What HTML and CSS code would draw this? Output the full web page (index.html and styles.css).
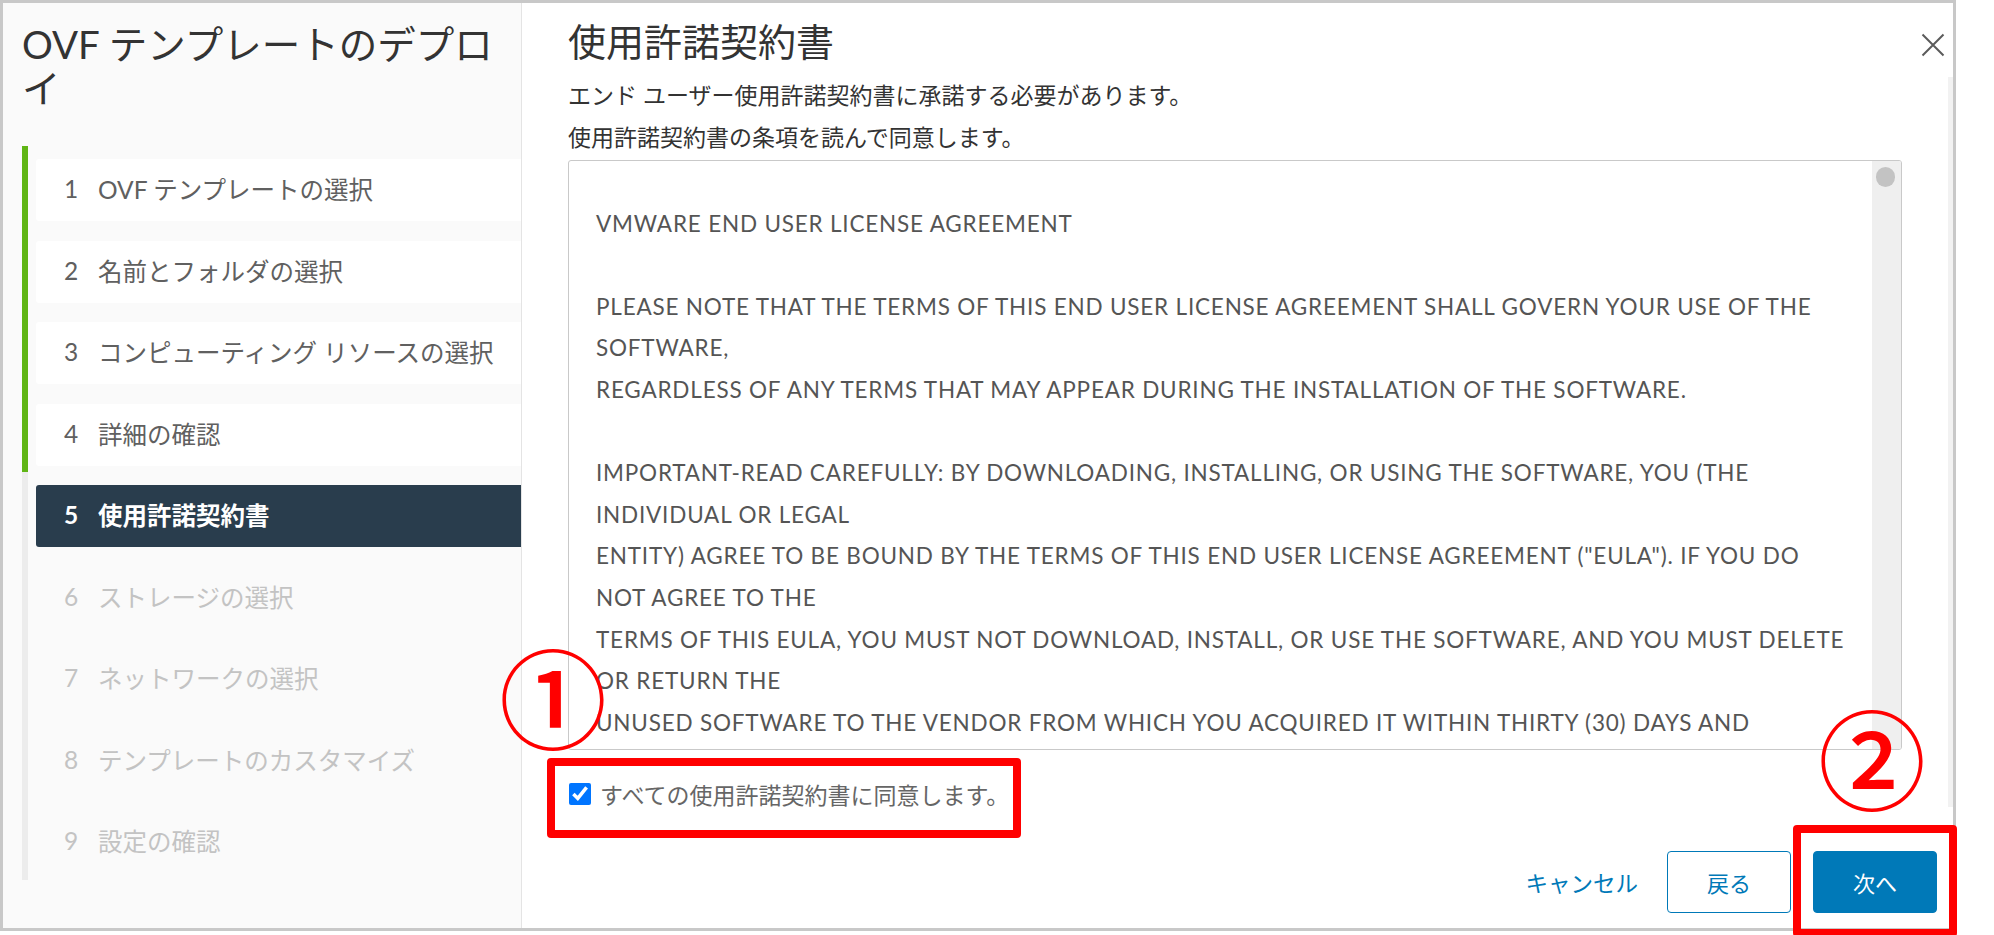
FILE: index.html
```html
<!DOCTYPE html>
<html>
  <head>
    <meta charset="utf-8">
    <link rel="stylesheet" href="styles.css">
  </head>
  <body>
    <div class="dialog">
      <aside class="sidebar">
        <h2 class="wizard-title">OVF テンプレートのデプロイ</h2>
        <ol class="steps">
          <li class="step done"><div class="step-box"><span class="num">1</span>OVF テンプレートの選択</div></li>
          <li class="step done"><div class="step-box"><span class="num">2</span>名前とフォルダの選択</div></li>
          <li class="step done"><div class="step-box"><span class="num">3</span>コンピューティング リソースの選択</div></li>
          <li class="step done"><div class="step-box"><span class="num">4</span>詳細の確認</div></li>
          <li class="step active"><div class="step-box"><span class="num">5</span>使用許諾契約書</div></li>
          <li class="step disabled"><div class="step-box"><span class="num">6</span>ストレージの選択</div></li>
          <li class="step disabled"><div class="step-box"><span class="num">7</span>ネットワークの選択</div></li>
          <li class="step disabled"><div class="step-box"><span class="num">8</span>テンプレートのカスタマイズ</div></li>
          <li class="step disabled"><div class="step-box"><span class="num">9</span>設定の確認</div></li>
        </ol>
      </aside>

      <main class="main">
        <div class="main-header">
          <h1 class="page-title">使用許諾契約書</h1>
          <button class="close-btn" aria-label="閉じる">
            <svg width="24" height="24" viewBox="0 0 24 24"><path d="M1.5 1.5 L22.5 22.5 M22.5 1.5 L1.5 22.5" stroke="#5b5b5b" stroke-width="2" fill="none"/></svg>
          </button>
        </div>
        <div class="content">
          <p class="desc">エンド ユーザー使用許諾契約書に承諾する必要があります。</p>
          <p class="desc">使用許諾契約書の条項を読んで同意します。</p>
          <div class="eula">
            <div class="eula-text">
&nbsp;
VMWARE END USER LICENSE AGREEMENT
&nbsp;
PLEASE NOTE THAT THE TERMS OF THIS END USER LICENSE AGREEMENT SHALL GOVERN YOUR USE OF THE
SOFTWARE,
REGARDLESS OF ANY TERMS THAT MAY APPEAR DURING THE INSTALLATION OF THE SOFTWARE.
&nbsp;
IMPORTANT-READ CAREFULLY: BY DOWNLOADING, INSTALLING, OR USING THE SOFTWARE, YOU (THE
INDIVIDUAL OR LEGAL
ENTITY) AGREE TO BE BOUND BY THE TERMS OF THIS END USER LICENSE AGREEMENT ("EULA"). IF YOU DO
NOT AGREE TO THE
TERMS OF THIS EULA, YOU MUST NOT DOWNLOAD, INSTALL, OR USE THE SOFTWARE, AND YOU MUST DELETE
OR RETURN THE
UNUSED SOFTWARE TO THE VENDOR FROM WHICH YOU ACQUIRED IT WITHIN THIRTY (30) DAYS AND</div>
            <div class="scroll-track"><div class="scroll-thumb"></div></div>
          </div>
          <label class="agree"><input type="checkbox" checked>すべての使用許諾契約書に同意します。</label>
        </div>
        <div class="footer">
          <button class="btn-link">キャンセル</button>
          <button class="btn btn-outline">戻る</button>
          <button class="btn btn-primary">次へ</button>
        </div>
      </main>
    </div>

    <!-- annotations -->
    <div class="mark mark-1">①</div>
    <div class="mark mark-2">②</div>
    <div class="frame frame-1"></div>
    <div class="frame frame-2"></div>
  </body>
</html>
```

FILE: styles.css
```css
/* OVF deploy wizard */
body {
  margin: 0;
  background-color: #fff;
  font-family: "Lato", "Noto Sans CJK JP", sans-serif;
  color: #333;
}
.dialog {
  display: flex;
  width: 1956px;
  height: 931px;
  box-sizing: border-box;
  border: 3px solid #c8c8c8;
  background-color: #fff;
}

/* left side */
.sidebar {
  width: 519px;
  flex-shrink: 0;
  box-sizing: border-box;
  background-color: #fafafa;
  border-right: 1px solid #e4e4e4;
  padding-top: 19px;
}
.wizard-title {
  margin: 0;
  padding: 0 14px 0 19px;
  font-size: 38.5px;
  line-height: 44px;
  font-weight: 400;
  color: #333;
}
.steps {
  list-style: none;
  margin: 36px 0 0 19px;
  padding: 0;
}
.step {
  border-left: 6px solid #ececec;
  padding: 13px 0 6.5px 8px;
}
.step.done {
  border-left-color: #60b515;
}
.step-box {
  display: flex;
  align-items: center;
  height: 62px;
  padding-left: 28px;
  padding-bottom: 3px;
  box-sizing: border-box;
  font-size: 24.5px;
  color: #606060;
  border-radius: 3px 0 0 3px;
  white-space: nowrap;
}
.step.done .step-box {
  background-color: #fff;
}
.step.active .step-box {
  background-color: #293d4d;
  color: #fff;
  font-weight: 700;
}
.step.disabled .step-box {
  color: #c3c3c3;
}
.num {
  display: inline-block;
  width: 34px;
}

/* right side */
.main {
  flex: 1;
  display: flex;
  flex-direction: column;
  position: relative;
  padding: 16px 8px 0 46px;
}
.main::after {
  content: "";
  position: absolute;
  right: 0;
  top: 74px;
  width: 5px;
  height: 730px;
  background-color: #f2f2f2;
}
.main-header {
  display: flex;
  justify-content: space-between;
  align-items: flex-start;
}
.page-title {
  margin: 0;
  font-size: 38px;
  line-height: 44px;
  font-weight: 400;
  color: #333;
}
.close-btn {
  margin-top: 14px;
  padding: 0;
  border: none;
  background: none;
  width: 24px;
  height: 24px;
}
.close-btn svg {
  display: block;
}
.content {
  margin-right: 43px;
}
.desc {
  margin: 0;
  font-size: 23px;
  line-height: 42px;
  color: #333;
}
.desc:first-child {
  margin-top: 11px;
}
.eula {
  display: flex;
  margin-top: 2px;
  height: 590px;
  box-sizing: border-box;
  border: 1px solid #c9c9c9;
  border-radius: 3px;
  overflow: hidden;
}
.eula-text {
  flex: 1;
  padding-left: 27px;
  margin-top: -41.6px;
  white-space: pre;
  font-size: 22.5px;
  line-height: 41.6px;
  letter-spacing: 0.8px;
  color: #555;
}
.scroll-track {
  width: 29px;
  flex-shrink: 0;
  background-color: #efefef;
}
.scroll-thumb {
  width: 19px;
  height: 20px;
  margin: 6px 0 0 4px;
  border-radius: 10px;
  background-color: #c3c3c3;
}
.agree {
  display: flex;
  align-items: center;
  gap: 9px;
  margin-top: 33px;
  height: 22px;
  font-size: 23px;
  color: #666;
}
.agree input {
  width: 22px;
  height: 22px;
  margin: 0 0 0 1px;
  accent-color: #0075ff;
}
.footer {
  display: flex;
  justify-content: flex-end;
  align-items: center;
  gap: 22px;
  margin-top: 46px;
  margin-right: 8px;
}
.btn-link {
  margin-right: 7px;
  padding: 0;
  border: none;
  background: none;
  font-family: inherit;
  font-size: 22.5px;
  color: #0079b8;
}
.btn {
  width: 124px;
  height: 62px;
  box-sizing: border-box;
  border: 1px solid #0079b8;
  border-radius: 4px;
  font-family: inherit;
  font-size: 22px;
}
.btn-outline {
  background-color: #fff;
  color: #0079b8;
}
.btn-primary {
  background-color: #0079b8;
  color: #fff;
}

/* red annotations over the screenshot */
.mark {
  position: absolute;
  font-family: "Noto Sans CJK JP", sans-serif;
  font-size: 108px;
  line-height: 1;
  font-weight: 500;
  color: #f00;
}
.mark-1 {
  left: 499px;
  top: 640px;
}
.mark-2 {
  left: 1818px;
  top: 701px;
}
.frame {
  position: absolute;
  box-sizing: border-box;
  border: 8px solid #f00;
  border-radius: 4px;
}
.frame-1 {
  left: 547px;
  top: 758px;
  width: 474px;
  height: 80px;
}
.frame-2 {
  left: 1793px;
  top: 825px;
  width: 164px;
  height: 112px;
}
```
